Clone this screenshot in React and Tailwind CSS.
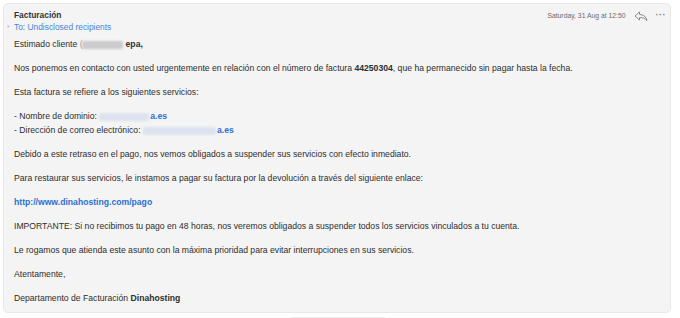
import React from 'react';

const ReplyIcon = () => (
  <svg width="14" height="11" viewBox="0 0 14 11" fill="none" stroke="#8a8a8a" strokeWidth="1" strokeLinejoin="round">
    <path d="M5.5 1 L1 5 L5.5 9 V6.6 C8.5 6.4 11 7.4 13 9.6 C12.4 6 9.6 3.6 5.5 3.4 Z" />
  </svg>
);

const Blur = ({ w, tone = 'gray' }) => (
  <span
    className={
      tone === 'gray'
        ? 'inline-block align-middle h-[8px] rounded-[2px] bg-[#cbcbcb] blur-[0.8px]'
        : 'inline-block align-middle h-[8px] rounded-[2px] bg-[#dde3ee] blur-[0.8px]'
    }
    style={{ width: w }}
  />
);

const App = () => {
  return (
    <div className="w-[680px] h-[318px] bg-white overflow-hidden" style={{ fontFamily: '"Liberation Sans", Arial, sans-serif' }}>
      <div className="ml-[3px] mt-[3px] w-[668px] rounded-[5px] border border-[#e8e8e8] bg-[#f4f4f4] pt-[5px] pb-[6px] pl-[10px] pr-[4px] text-[#2e2e2e]">
        <div className="flex items-start justify-between">
          <div>
            <div className="text-[8.4px] leading-[12px] font-bold text-[#333]">Facturación</div>
            <div className="flex items-center -ml-[7px] leading-[12px]">
              <span className="w-[7px] text-[7px] text-[#999]">›</span>
              <span className="text-[8.4px] text-[#4a84d6]">To: Undisclosed recipients</span>
            </div>
          </div>
          <div className="flex items-center gap-[8px] mt-[2px]">
            <span className="text-[6.8px] text-[#6b6b6b]">Saturday, 31 Aug at 12:50</span>
            <ReplyIcon />
            <span className="text-[9px] font-bold text-[#777] tracking-[0.5px] leading-none -mt-[3px]">···</span>
          </div>
        </div>

        <div className="mt-[5px] flex flex-col gap-[10.6px] text-[8.65px] leading-[13.5px]">
          <p className="flex items-center whitespace-pre">
            <span>Estimado cliente </span>
            <span className="text-[#999] -mr-[1px]">(</span>
            <Blur w="41px" />
            <span className="font-bold ml-[3px]">epa,</span>
          </p>
          <p>
            Nos ponemos en contacto con usted urgentemente en relación con el número de factura <b>44250304</b>, que ha permanecido sin pagar hasta la fecha.
          </p>
          <p>Esta factura se refiere a los siguientes servicios:</p>
          <div>
            <p className="flex items-center whitespace-pre">
              <span>- Nombre de dominio: </span>
              <Blur w="50px" tone="blue" />
              <span className="font-bold text-[#2b6fd3] ml-[1px]">a.es</span>
            </p>
            <p className="flex items-center whitespace-pre">
              <span>- Dirección de correo electrónico: </span>
              <Blur w="73px" tone="blue" />
              <span className="font-bold text-[#2b6fd3] ml-[1px]">a.es</span>
            </p>
          </div>
          <p>Debido a este retraso en el pago, nos vemos obligados a suspender sus servicios con efecto inmediato.</p>
          <p>Para restaurar sus servicios, le instamos a pagar su factura por la devolución a través del siguiente enlace:</p>
          <p className="font-bold text-[#2b6fd3]">http://www.dinahosting.com/pago</p>
          <p>IMPORTANTE: Si no recibimos tu pago en 48 horas, nos veremos obligados a suspender todos los servicios vinculados a tu cuenta.</p>
          <p>Le rogamos que atienda este asunto con la máxima prioridad para evitar interrupciones en sus servicios.</p>
          <p>Atentamente,</p>
          <p>
            Departamento de Facturación <b>Dinahosting</b>
          </p>
        </div>
      </div>
      <div className="mt-[4px] ml-[288px] w-[100px] h-[20px] rounded-[5px] border border-[#ececec] bg-white" />
    </div>
  );
};

export default App;
